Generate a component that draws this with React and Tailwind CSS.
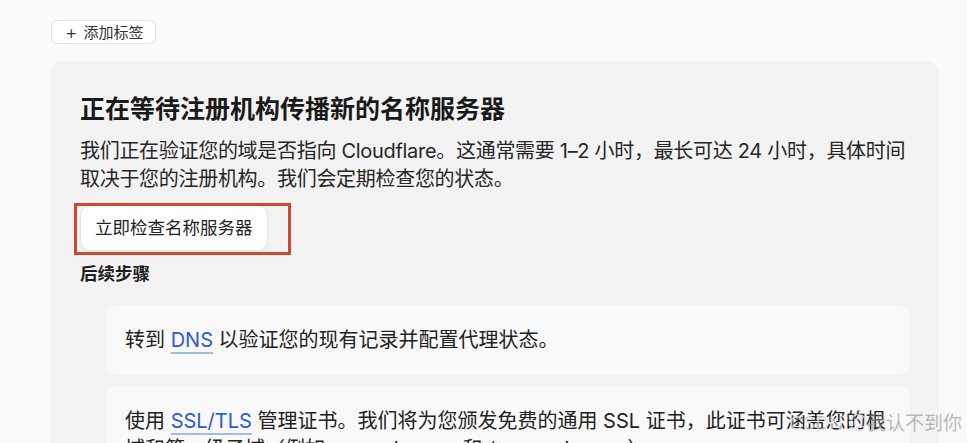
import React from "react";

const font = { fontFamily: '"Inter", "Noto Sans CJK SC", "Noto Sans", sans-serif' };

const steps = [
    {
        before: "转到 ",
        link: "DNS",
        after: " 以验证您的现有记录并配置代理状态。",
    },
    {
        before: "使用 ",
        link: "SSL/TLS",
        after: " 管理证书。我们将为您颁发免费的通用 SSL 证书，此证书可涵盖您的根域和第一级子域（例如 example.com 和 *.example.com）。",
    },
    {
        before: "前往 ",
        link: "安全性",
        after: " 设置以保护您的网站免受攻击。",
    },
];

const StepCard = ({ step }) => (
    <div className="rounded-[10px] bg-[#f9f9f9] px-5 py-[21px] text-[20px] leading-[28px] text-[#222]">
        {step.before}
        <a
            href="#"
            className="text-[#2b5bd6] underline decoration-[#a7b8ea] underline-offset-[5px]"
        >
            {step.link}
        </a>
        {step.after}
    </div>
);

export default function App() {
    return (
        <div
            className="relative h-[443px] overflow-hidden bg-[#fafafa] pl-[51px] pr-[28px] pt-5"
            style={font}
        >
            <button className="flex h-6 items-center gap-[6px] rounded-md border border-[#e2e2e2] bg-white pl-[13px] pr-[12px] text-[15px] leading-none text-[#333]">
                <span className="text-[19px] font-light leading-none">+</span>
                添加标签
            </button>

            <div className="mt-[17px] rounded-xl bg-[#f3f3f3] px-[29px] pb-10 pt-8">
                <h2 className="text-[25px] font-bold leading-[32px] text-[#1a1a1a]">
                    正在等待注册机构传播新的名称服务器
                </h2>
                <p className="mt-3 whitespace-nowrap text-[20px] leading-[28px] tracking-[-0.3px] text-[#262626]">
                    我们正在验证您的域是否指向 Cloudflare。这通常需要 1–2 小时，最长可达 24 小时，具体时间
                    <br />
                    取决于您的注册机构。我们会定期检查您的状态。
                </p>

                <div className="relative mt-3 w-fit">
                    <button className="h-[46px] rounded-[10px] border border-[#e6e6e6] bg-white px-[14px] text-[17.5px] text-[#222] shadow-[0_1px_2px_rgba(0,0,0,0.06)]">
                        立即检查名称服务器
                    </button>
                    <div className="pointer-events-none absolute left-[-6px] top-[-2px] h-[52px] w-[217px] border-[3px] border-[#d5472c]" />
                </div>

                <h3 className="mt-[10px] text-[17.5px] font-bold leading-[26px] text-[#1f1f1f]">
                    后续步骤
                </h3>

                <div className="ml-[25px] mt-[18px] flex flex-col gap-[11px]">
                    {steps.map((step, i) => (
                        <StepCard key={i} step={step} />
                    ))}
                </div>
            </div>

            <div className="pointer-events-none absolute bottom-[5px] right-[5px] text-[19px] text-[rgba(140,140,140,0.6)]">
                <span className="text-[rgba(220,220,220,0.8)]">CSDN @</span>我认不到你
            </div>
        </div>
    );
}
